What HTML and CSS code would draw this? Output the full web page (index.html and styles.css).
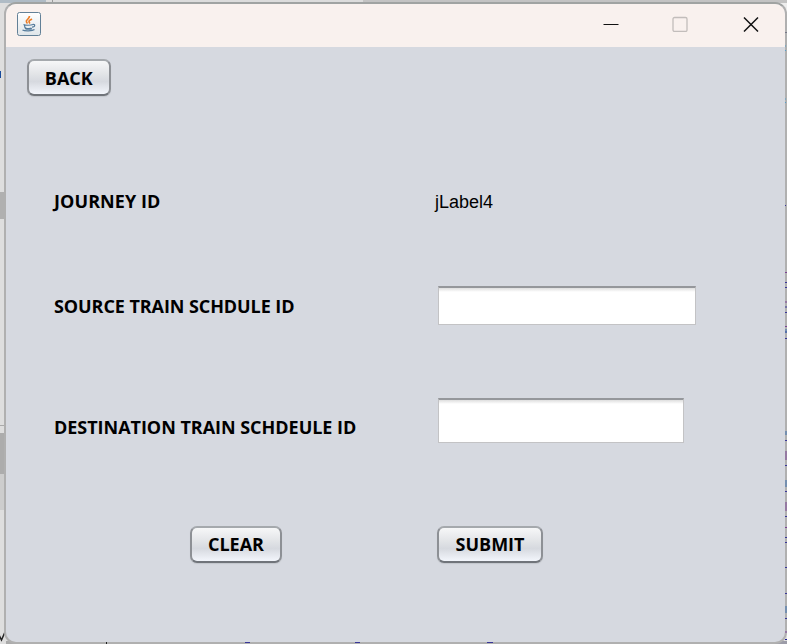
FILE: index.html
```
<!DOCTYPE html>
<html lang="en">
<head>
<meta charset="utf-8">
<title>Journey</title>
<link rel="stylesheet" href="styles.css">
</head>
<body>
<svg class="desktop" viewBox="0 0 787 644" aria-hidden="true">
  <rect width="787" height="644" fill="#dedede"/>
  <rect width="363" height="3" fill="#dcdcdc"/>
  <rect width="46" height="3" fill="#afbbc5"/>
  <path d="M52.5 0v3" stroke="#999"/>
  <rect x="363" width="424" height="3" fill="#c3c3c3"/>
  <path d="M0 71h1v7h-1z" fill="#174b9c"/>
  <rect y="192" width="6" height="27" fill="#b0b0b0"/>
  <rect y="425" width="6" height="1" fill="#aaa"/>
  <rect y="433" width="6" height="41" fill="#acacac"/>
  <rect y="474" width="6" height="36" fill="#cdcdcd"/>
  <path d="M-3 631l4.500 9l3.500-8" fill="none" stroke="#222" stroke-width="1.500"/>
  <rect x="772" y="3" width="15" height="30" fill="#eee"/>
  <rect x="6" y="641" width="204" height="3" fill="#aaa"/>
  <rect x="210" y="641" width="577" height="3" fill="#9c9ca8"/>
</svg>
<main class="window">
  <header class="titlebar">
    <svg class="java" viewBox="0 0 24 24">
      <defs><linearGradient id="tile" x2="0" y2="1"><stop stop-color="#fff"/><stop offset="1" stop-color="#dfe5e9"/></linearGradient></defs>
      <rect x=".5" y=".5" width="23" height="23" rx="2" fill="url(#tile)" stroke="#628097"/>
      <path d="M10.500 11.500C7 8 12.500 7.500 12.500 4M13 11.500c-2.500-2.500 0-3.500 2-4.500" fill="none" stroke="#ed7d27" stroke-width="1.700"/>
      <path d="M6.500 12.500c1.500 1 7.500 1 9.500 0M7.500 13.500c0 3.500 2 3.500 7 2.500M15.500 12.500c3-.8 3 2.500-.5 2.700M5.500 18c2 1.300 10 1.200 12-.5M8 16.500c2 1 5 .8 7 .2" fill="none" stroke="#557b9b" stroke-width="1.200"/>
    </svg>
    <div class="controls">
      <svg viewBox="0 0 16 16"><path d="M.5 8.500h15" stroke="#111" fill="none"/></svg>
      <svg viewBox="0 0 16 16"><rect x="1" y="1.500" width="14" height="14" rx="1.500" fill="none" stroke="#c2bdbb" stroke-width="1.300"/></svg>
      <svg viewBox="0 0 16 16"><path d="M1 1.500l14 14M15 1.500L1 15.500" stroke="#111" stroke-width="1.500" fill="none"/></svg>
    </div>
  </header>
  <section class="content">
    <button class="btn back">BACK</button>
    <div class="form">
      <div class="row journey"><span class="label l1">JOURNEY ID</span><span class="value">jLabel4</span></div>
      <div class="row source"><label class="label l2" for="source">SOURCE TRAIN SCHDULE ID</label><input class="field" id="source" type="text"></div>
      <div class="row destination"><label class="label l3" for="destination">DESTINATION TRAIN SCHDEULE ID</label><input class="field tall" id="destination" type="text"></div>
    </div>
    <div class="actions"><button class="btn clear">CLEAR</button><button class="btn submit">SUBMIT</button></div>
  </section>
</main>
<svg class="edge" viewBox="0 0 2 644" aria-hidden="true">
  <path d="M0 32.500h2" stroke="#777788"/>
  <path d="M0 46h1M0 50.500h1M0 99h1M0 102.500h1" stroke="#54a0ca"/>
  <path d="M0 205.500h1M0 282.500h2M0 287.500h2M0 307h2M0 312.500h2M0 332h2M0 338.500h2M0 440.500h2M0 465.500h2M0 491.500h2M0 516.500h2M0 537.500h2M0 542.500h2M0 567.500h2M0 593.500h2M0 618.500h2" stroke="#393699"/>
  <path d="M0 272.500h2M0 302h2M0 326.500h2M1 451v9M1 502v9M0 527.500h2M0 632h2" stroke="#7b4294"/>
  <path d="M1 431v4M1 480v7M1 329v4M1 606v7" stroke="#386fae"/>
  <path d="M0 639.500h2" stroke="#191991"/>
</svg>
<svg class="foot" viewBox="0 0 787 2" aria-hidden="true">
  <path d="M245 .5h5M355 .5h5M487 .5h6" stroke="#393699"/>
  <path d="M106.500 0v2" stroke="#222"/>
</svg>
</body>
</html>
```
FILE: styles.css
```
* { box-sizing: border-box; }
body {
  margin: 0;
  width: 787px;
  height: 644px;
  overflow: hidden;
  padding: 2px 0 0 4px;
  font-family: "Open Sans", "Noto Sans", sans-serif;
  color: #000;
}
.desktop { position: absolute; inset: 0; width: 787px; height: 644px; z-index: -1; }
.edge { position: absolute; right: 0; top: 0; width: 2px; height: 644px; }
.foot { position: absolute; left: 0; bottom: 0; width: 787px; height: 2px; }
.window {
  width: 783px;
  height: 642px;
  border: 2px solid #b0b0b0;
  border-top-color: #a0a3a2;
  border-radius: 12px;
  overflow: hidden;
  background: #d6d9e0;
}
.titlebar {
  display: flex;
  justify-content: space-between;
  height: 43px;
  padding: 8px 27px 0 11px;
  background: #f9f1ee;
}
.java { width: 24px; height: 24px; }
.controls { display: flex; gap: 54px; padding-top: 4px; }
.controls svg { width: 16px; height: 16px; }
.controls { margin-right: -.5px; }
.controls svg:first-child { margin-right: -1px; }
.controls svg:last-child { margin-left: 1px; }
.content { padding: 12px 0 0 20.5px; }
.btn {
  display: flex;
  align-items: center;
  justify-content: center;
  height: 37px;
  padding: 1px 0 0;
  border: 2px solid;
  border-color: #a5a9ad #8d9095 #70747a;
  border-radius: 7px;
  background: linear-gradient(#f6f7f8 0%, #e2e4e7 40%, #d6d9df 62%, #f3f6fc 100%);
  box-shadow: 0 1px 1px #c3c6cc;
  font: 700 18px/24px "Open Sans", sans-serif;
  color: #000;
}
.back { width: 84.5px; }
.clear { width: 92px; }
.submit { width: 106px; }
.form { padding: 87px 0 0 27.5px; }
.row { display: grid; grid-template-columns: 384px auto; align-items: center; }
.label { font-size: 18px; line-height: 24px; font-weight: 700; white-space: nowrap; }
.l1 { letter-spacing: .08px; }
.l2 { letter-spacing: -.08px; }
.l3 { letter-spacing: -.03px; }
.value { margin-left: -3px; padding-top: 1px; font: 18px/24px "Liberation Sans", Arial, sans-serif; }
.journey { height: 36px; }
.source { height: 38px; margin-top: 67px; }
.source .label { padding-top: 0; }
.destination { height: 45px; margin-top: 74px; }
.destination .label { padding-top: 13px; }
.field {
  width: 257.5px;
  height: 39px;
  border: 1px solid #c3c3c5;
  border-top: 2px solid #95979b;
  border-radius: 0;
  background: linear-gradient(#dedede, #fff 4px);
  outline: 0;
}
.tall { width: 246px; height: 45px; }
.actions { display: flex; gap: 155px; padding: 82.500px 0 0 163.5px; }
.actions .btn { padding: 0; }
```
